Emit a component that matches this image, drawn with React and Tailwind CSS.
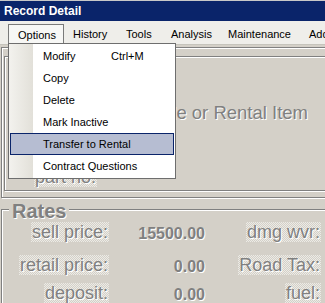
import React from 'react';

const menus = [
  { label: 'Options', w: 'w-[56px]', active: true },
  { label: 'History', w: 'w-[53px]' },
  { label: 'Tools', w: 'w-[45px]' },
  { label: 'Analysis', w: 'w-[57px]' },
  { label: 'Maintenance', w: 'w-[81px]' },
  { label: 'Add', w: 'w-[40px]' },
];

const items = [
  { label: 'Modify', key: 'Ctrl+M' },
  { label: 'Copy' },
  { label: 'Delete' },
  { label: 'Mark Inactive' },
  { label: 'Transfer to Rental', hot: true },
  { label: 'Contract Questions' },
];

const rates = [
  ['sell price:', '15500.00', 'dmg wvr:'],
  ['retail price:', '0.00', 'Road Tax:'],
  ['deposit:', '0.00', 'fuel:'],
];

const etched = 'border border-[#808080] [box-shadow:inset_1px_1px_0_#fff,1px_1px_0_#fff]';
const dim = 'text-[#808080] [text-shadow:1px_1px_0_#fff]';
const dots = 'bg-[repeating-conic-gradient(#ecebe6_0_25%,transparent_0_50%)] bg-[length:2px_2px]';

function Label({ children }) {
  return <span className={`${dim} ${dots} text-[18px] leading-[21px] px-[1px]`}>{children}</span>;
}

export default function App() {
  return (
    <div className="relative w-[325px] h-[303px] overflow-hidden bg-[#d4d0c8] font-['Liberation_Sans',Arial,sans-serif]">
      <div className="h-[21px] border-t border-[#c8c8c8] bg-[#0a246a] flex items-center pl-[4px] text-white font-bold text-[12px]">
        Record Detail
      </div>

      <div className="h-[24px] pt-[3px] bg-[#efeeea] border-b border-[#c6c4bc] flex">
        {menus.map((m) => (
          <div
            key={m.label}
            className={`${m.w} shrink-0 h-[21px] pl-[9px] flex items-center text-[11px] text-black ${
              m.active ? 'border border-b-0 border-[#7a7a7a] bg-[#f7f7f5] pl-[8px] ml-[8px]' : ''
            }`}
          >
            {m.label}
          </div>
        ))}
      </div>

      <div className="pl-[1px] pt-[2px]">
        <div className={`${etched} -mr-[20px] h-[151px] pl-[2px] pt-[8px]`}>
          <div className={`${etched} h-[135px] flex flex-col`}>
            <div className={`${dim} text-[18.5px] leading-[22px] mt-[45px] pr-[35px] text-right`}>Sale or Rental Item</div>
            <div className="mt-[43px] pl-[29px] leading-[21px]">
              <Label>part no:</Label>
            </div>
          </div>
        </div>

        <div className="relative mt-[11px]">
          <div className={`${etched} -mr-[20px] h-[120px]`}>
            <div className="grid grid-cols-[107px_96px_116px] grid-rows-[34px_32px_24px] items-center pt-[6px]">
              {rates.map(([a, b, c]) => (
                <React.Fragment key={a}>
                  <div className="text-right">
                    <Label>{a}</Label>
                  </div>
                  <div className={`${dim} text-right font-bold text-[16px] leading-[21px]`}>{b}</div>
                  <div className="text-right">
                    <Label>{c}</Label>
                  </div>
                </React.Fragment>
              ))}
            </div>
          </div>
          <div className={`absolute left-[8px] -top-[8px] px-[3px] bg-[#d4d0c8] ${dim} font-bold text-[20px] leading-[20px]`}>
            Rates
          </div>
        </div>
      </div>

      <div className="absolute left-[8px] top-[43px] w-[168px] h-[136px] border border-[#6e6e6e] py-[1px] bg-[linear-gradient(to_right,#f3f2ee_0,#e2e0d9_24px,#fff_24px)]">
        {items.map((it) => (
          <div
            key={it.label}
            className={`mx-[1px] h-[22px] border flex items-center pl-[32px] text-[11px] text-black ${
              it.hot ? 'border-[#0a246a] bg-[#b6bdd2]' : 'border-transparent'
            }`}
          >
            <span className={it.key ? 'w-[68px]' : ''}>{it.label}</span>
            {it.key && <span>{it.key}</span>}
          </div>
        ))}
      </div>
    </div>
  );
}
